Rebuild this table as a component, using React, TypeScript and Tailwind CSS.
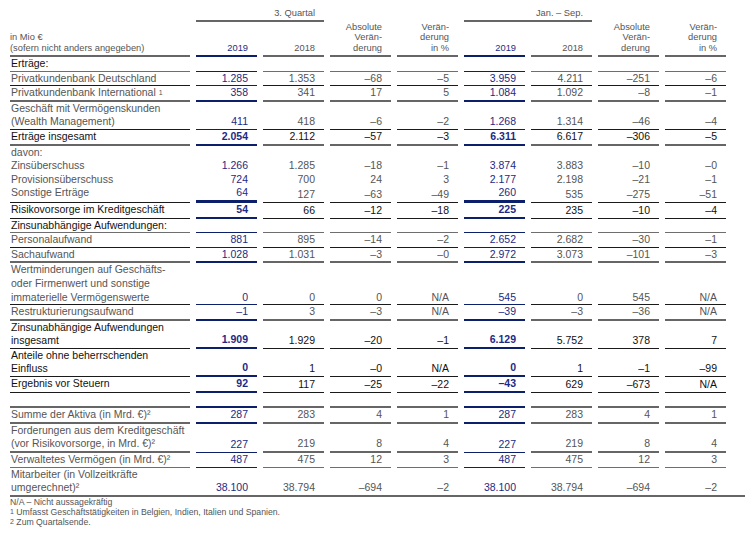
import type { ReactNode } from 'react';

type Line = 'none' | 'k1' | 'g1' | 'g2';
type Navy = 0 | 1 | 2 | 3;

type Row = {
  label: ReactNode;
  vals?: string[];
  kind?: 'normal' | 'total' | 'section';
  line: Line;
  navy: Navy;
  full?: boolean;
};

const lineCls: Record<Line, string> = {
  none: '',
  k1: 'border-b border-[#1a1a1a]',
  g1: 'border-b border-[#6e6e6e]',
  g2: 'border-b-2 border-[#666666]',
};

const navyCls: Record<Navy, string> = {
  0: '',
  1: 'border-b border-[#0b1f6b]',
  2: 'border-b-2 border-[#0b1f6b]',
  3: 'border-b-[3px] border-[#0b1f6b]',
};

const Sup = ({ n }: { n: string }) => <sup className="text-[7px] leading-none relative -top-[1px]">{n}</sup>;

const rows: Row[] = [
  { label: 'Erträge:', kind: 'section', line: 'g1', navy: 1 },
  { label: 'Privatkundenbank Deutschland', vals: ['1.285', '1.353', '–68', '–5', '3.959', '4.211', '–251', '–6'], line: 'k1', navy: 1 },
  {
    label: (
      <>
        Privatkundenbank International <Sup n="1" />
      </>
    ),
    vals: ['358', '341', '17', '5', '1.084', '1.092', '–8', '–1'],
    line: 'g2',
    navy: 2,
  },
  {
    label: (
      <>
        Geschäft mit Vermögenskunden
        <br />
        (Wealth Management)
      </>
    ),
    vals: ['411', '418', '–6', '–2', '1.268', '1.314', '–46', '–4'],
    line: 'k1',
    navy: 1,
  },
  { label: 'Erträge insgesamt', kind: 'total', vals: ['2.054', '2.112', '–57', '–3', '6.311', '6.617', '–306', '–5'], line: 'g2', navy: 2 },
  { label: 'davon:', line: 'none', navy: 0 },
  { label: 'Zinsüberschuss', vals: ['1.266', '1.285', '–18', '–1', '3.874', '3.883', '–10', '–0'], line: 'none', navy: 0 },
  { label: 'Provisionsüberschuss', vals: ['724', '700', '24', '3', '2.177', '2.198', '–21', '–1'], line: 'none', navy: 0 },
  { label: 'Sonstige Erträge', vals: ['64', '127', '–63', '–49', '260', '535', '–275', '–51'], line: 'k1', navy: 3 },
  { label: 'Risikovorsorge im Kreditgeschäft', kind: 'total', vals: ['54', '66', '–12', '–18', '225', '235', '–10', '–4'], line: 'k1', navy: 2 },
  { label: 'Zinsunabhängige Aufwendungen:', kind: 'section', line: 'g1', navy: 1 },
  { label: 'Personalaufwand', vals: ['881', '895', '–14', '–2', '2.652', '2.682', '–30', '–1'], line: 'k1', navy: 1 },
  { label: 'Sachaufwand', vals: ['1.028', '1.031', '–3', '–0', '2.972', '3.073', '–101', '–3'], line: 'g2', navy: 2 },
  {
    label: (
      <>
        Wertminderungen auf Geschäfts-
        <br />
        oder Firmenwert und sonstige
        <br />
        immaterielle Vermögenswerte
      </>
    ),
    vals: ['0', '0', '0', 'N/A', '545', '0', '545', 'N/A'],
    line: 'k1',
    navy: 1,
  },
  { label: 'Restrukturierungsaufwand', vals: ['–1', '3', '–3', 'N/A', '–39', '–3', '–36', 'N/A'], line: 'g2', navy: 2 },
  {
    label: (
      <>
        Zinsunabhängige Aufwendungen
        <br />
        insgesamt
      </>
    ),
    kind: 'total',
    vals: ['1.909', '1.929', '–20', '–1', '6.129', '5.752', '378', '7'],
    line: 'k1',
    navy: 2,
  },
  {
    label: (
      <>
        Anteile ohne beherrschenden
        <br />
        Einfluss
      </>
    ),
    kind: 'total',
    vals: ['0', '1', '–0', 'N/A', '0', '1', '–1', '–99'],
    line: 'k1',
    navy: 2,
  },
  { label: 'Ergebnis vor Steuern', kind: 'total', vals: ['92', '117', '–25', '–22', '–43', '629', '–673', 'N/A'], line: 'k1', navy: 2 },
  { label: '\u00a0', line: 'g2', navy: 2 },
  {
    label: 'Summe der Aktiva (in Mrd. €)²',
    vals: ['287', '283', '4', '1', '287', '283', '4', '1'],
    line: 'g2',
    navy: 2,
  },
  {
    label: (
      <>
        Forderungen aus dem Kreditgeschäft
        <br />
        (vor Risikovorsorge, in Mrd. €)²
      </>
    ),
    vals: ['227', '219', '8', '4', '227', '219', '8', '4'],
    line: 'g2',
    navy: 1,
  },
  { label: 'Verwaltetes Vermögen (in Mrd. €)²', vals: ['487', '475', '12', '3', '487', '475', '12', '3'], line: 'g1', navy: 1 },
  {
    label: (
      <>
        Mitarbeiter (in Vollzeitkräfte
        <br />
        umgerechnet)²
      </>
    ),
    vals: ['38.100', '38.794', '–694', '–2', '38.100', '38.794', '–694', '–2'],
    line: 'g2',
    navy: 0,
    full: true,
  },
];

const grid = 'grid grid-cols-[180px_61px_61px_61px_61px_61px_61px_61px_61px] gap-x-[6px]';

function BodyRow({ row }: { row: Row }) {
  const kind = row.kind ?? 'normal';
  const labelColor = kind === 'normal' ? 'text-[#555555]' : 'text-[#111111]';
  const otherColor = kind === 'total' ? 'text-[#111111]' : 'text-[#555555]';
  const rowBorder = row.full ? 'border-b-2 border-[#666666]' : '';
  const cellLine = row.full ? '' : lineCls[row.line];
  const cellNavy = row.full ? '' : navyCls[row.navy];
  const vals = row.vals ?? ['', '', '', '', '', '', '', ''];

  return (
    <div className={`${grid} ${rowBorder} leading-[13.6px] text-[10.5px]`}>
      <div className={`pl-[1px] ${labelColor} ${cellLine}`}>{row.label}</div>
      {vals.map((v, i) => {
        const isNavy = i === 0 || i === 4;
        return (
          <div
            key={i}
            className={`flex items-end justify-end pr-[9px] ${
              isNavy
                ? `text-[#1c2a85] ${kind === 'total' ? 'font-bold' : ''} ${cellNavy}`
                : `${otherColor} ${cellLine}`
            }`}
          >
            {v}
          </div>
        );
      })}
    </div>
  );
}

export default function App() {
  return (
    <div className="w-[745px] h-[537px] bg-white pl-[10px] font-['Liberation_Sans',Arial,sans-serif] overflow-hidden">
      <div className={`${grid} text-[9.3px] leading-[10.5px] text-[#555555]`}>
        <div />
        <div className="col-span-2 pt-[8px] pb-[1px] pr-[9px] text-right border-b-2 border-[#666666]">3. Quartal</div>
        <div />
        <div />
        <div className="col-span-2 pt-[8px] pb-[1px] pr-[9px] text-right border-b-2 border-[#666666]">Jan. – Sep.</div>
      </div>

      <div className={`${grid} text-[9.3px] leading-[10.5px] text-[#555555]`}>
        <div className="flex flex-col justify-end pb-[2px] h-[35.5px] border-b-2 border-[#666666]">
          <span>in Mio €</span>
          <span>(sofern nicht anders angegeben)</span>
        </div>
        <div className="flex items-end justify-end pr-[9px] pb-[2px] text-[#1c2a85] border-b-2 border-[#0b1f6b]">2019</div>
        <div className="flex items-end justify-end pr-[9px] pb-[2px] border-b-2 border-[#666666]">2018</div>
        <div className="flex items-end justify-end pr-[9px] pb-[2px] text-right border-b-2 border-[#666666]">
          Absolute
          <br />
          Verän-
          <br />
          derung
        </div>
        <div className="flex items-end justify-end pr-[9px] pb-[2px] text-right border-b-2 border-[#666666]">
          Verän-
          <br />
          derung
          <br />
          in %
        </div>
        <div className="flex items-end justify-end pr-[9px] pb-[2px] text-[#1c2a85] border-b-2 border-[#0b1f6b]">2019</div>
        <div className="flex items-end justify-end pr-[9px] pb-[2px] border-b-2 border-[#666666]">2018</div>
        <div className="flex items-end justify-end pr-[9px] pb-[2px] text-right border-b-2 border-[#666666]">
          Absolute
          <br />
          Verän-
          <br />
          derung
        </div>
        <div className="flex items-end justify-end pr-[9px] pb-[2px] text-right border-b-2 border-[#666666]">
          Verän-
          <br />
          derung
          <br />
          in %
        </div>
      </div>

      {rows.map((r, i) => (
        <BodyRow key={i} row={r} />
      ))}

      <div className="text-[8.7px] leading-[10px] text-[#555555]">
        <div>N/A – Nicht aussagekräftig</div>
        <div>
          <Sup n="1" /> Umfasst Geschäftstätigkeiten in Belgien, Indien, Italien und Spanien.
        </div>
        <div>
          <Sup n="2" /> Zum Quartalsende.
        </div>
      </div>
    </div>
  );
}
